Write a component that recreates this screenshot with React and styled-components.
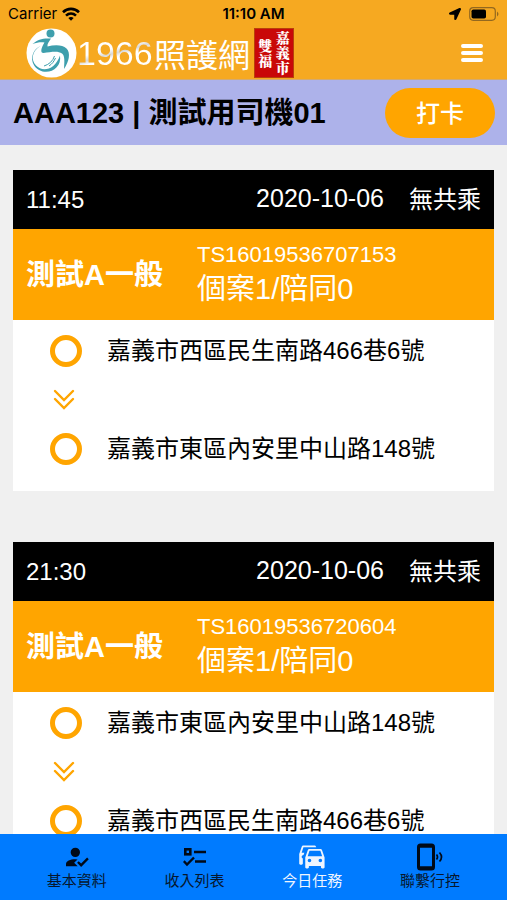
import React from "react";
import styled, { createGlobalStyle } from "styled-components";
import { FaLocationArrow } from "react-icons/fa";

const GlobalStyle = createGlobalStyle`
  * { box-sizing: border-box; }
  body {
    margin: 0;
    font-family: "Liberation Sans", "Noto Sans CJK TC", sans-serif;
    background: #f0f0f0;
    color: #000;
  }
  button { font: inherit; border: 0; cursor: pointer; }
`;

const Screen = styled.div`
  display: flex;
  flex-direction: column;
  height: 100vh;
`;

const Header = styled.header`
  flex: none;
  background: #f6a921;
  border-bottom: 1px solid #d3aa70;
`;

const StatusBar = styled.div`
  display: grid;
  grid-template-columns: 1fr auto 1fr;
  align-items: center;
  height: 26px;
  padding: 2px 8px 0;
  font: 400 15px/20px Inter, sans-serif;
`;

const StatusGroup = styled.div`
  display: flex;
  align-items: center;
  gap: ${(p) => (p.$end ? "8px" : "5px")};
  justify-content: ${(p) => (p.$end ? "flex-end" : "flex-start")};
`;

const Clock = styled.time`
  font-weight: 600;
`;

const BrandBar = styled.div`
  display: flex;
  align-items: center;
  justify-content: space-between;
  height: 53px;
  padding: 0 18px 0 26px;
`;

const Brand = styled.a`
  display: flex;
  align-items: center;
  color: #fff;
  text-decoration: none;
`;

const BrandNumber = styled.span`
  width: 77px;
  font: 400 34px/48px "Liberation Sans", sans-serif;
  background: linear-gradient(165deg, #fff 42%, #d8d8d8 50%, #fff 56%);
  background-clip: text;
  color: transparent;
`;

const BrandName = styled.span`
  font: 400 32px/48px "Noto Sans CJK TC", sans-serif;
`;

const Seal = styled.span`
  margin-left: 4px;
  width: 40px;
  height: 50px;
  display: flex;
  flex-direction: row-reverse;
  align-items: center;
  justify-content: space-evenly;
  background: #c90808;
  border: 1px solid #b8400c;
  font: 900 14px/15px "Noto Serif CJK TC", "Noto Sans CJK TC", serif;
`;

const SealColumn = styled.span`
  width: 14px;
  overflow-wrap: anywhere;
`;

const MenuButton = styled.button`
  display: grid;
  place-items: center;
  padding: 6px;
  background: transparent;
  color: #fff;
`;

const DriverBar = styled.section`
  flex: none;
  display: flex;
  align-items: center;
  justify-content: space-between;
  height: 65px;
  padding: 0 12px 0 13px;
  background: #adb2ea;
`;

const DriverName = styled.h1`
  margin: 0;
  font-size: 29px;
  line-height: 40px;
  font-weight: 700;
`;

const PunchButton = styled.button`
  width: 110px;
  height: 50px;
  padding: 0 0 2px;
  border-radius: 25px;
  background: #ffa500;
  color: #fff;
  && { font-size: 24px; font-weight: 500; }
`;

const TaskList = styled.main`
  flex: 1;
  min-height: 0;
  overflow-y: auto;
  scrollbar-width: none;
  padding: 25px 13px;
  display: flex;
  flex-direction: column;
  gap: 51px;
`;

const Card = styled.article`
  flex: none;
  background: #fff;
`;

const CardHeader = styled.div`
  display: flex;
  align-items: center;
  height: 59px;
  padding: 0 13px;
  background: #000;
  color: #fff;
  font-size: 24px;
  line-height: 36px;
`;

const TaskDate = styled.time`
  margin-left: auto;
  padding: 0 25px 4px 0;
  font-size: 25px;
`;

const Passenger = styled.div`
  display: grid;
  grid-template-columns: 171px 1fr;
  align-items: center;
  height: 91px;
  padding: 0 13px;
  background: #ffa500;
  color: #fff;
`;

const PassengerName = styled.h2`
  margin: 0;
  font-size: 29px;
  line-height: 40px;
`;

const OrderId = styled.div`
  font-size: 22px;
  line-height: 28px;
`;

const PartySize = styled.div`
  font-size: 29px;
  line-height: 40px;
`;

const Route = styled.div`
  padding: 6px 0 18px 35px;
`;

const RouteRow = styled.div`
  display: grid;
  grid-template-columns: 36px 1fr;
  column-gap: 23px;
  align-items: center;
  height: 49px;
  font-size: 24px;
  line-height: 36px;
`;

const Stop = styled.span`
  justify-self: center;
  width: 32px;
  height: 32px;
  border: 5px solid #ffa500;
  border-radius: 50%;
`;

const Arrow = styled.svg`
  justify-self: center;
  margin-right: 4px;
`;

const TabBar = styled.nav`
  flex: none;
  display: grid;
  grid-template-columns: repeat(4, 1fr);
  height: 66px;
  padding: 0 18px;
  background: #007bff;
`;

const Tab = styled.a`
  display: flex;
  flex-direction: column;
  align-items: center;
  padding-top: 9px;
  color: ${(p) => (p.$active ? "#eef5ff" : "#06172e")};
  font-size: 15px;
  line-height: 20px;
  text-decoration: none;
`;

const TabIcon = styled.span`
  display: grid;
  place-items: center;
  height: 28px;
  color: ${(p) => (p.$active ? "#eef5ff" : "#000a18")};
`;

function WifiIcon() {
  return (
    <svg width="18" height="14" viewBox="0 0 18 14" fill="none" stroke="#000" strokeWidth="2.6" aria-hidden="true">
      <path d="M1 5.2C5.5.8 12.5.8 17 5.2M4 8.6c2.9-2.6 7.1-2.6 10 0" />
      <path d="M6.3 11Q9 8.8 11.7 11L9 13.8Z" fill="#000" stroke="none" />
    </svg>
  );
}

function BatteryIcon() {
  return (
    <svg width="30" height="14" viewBox="0 0 30 14" aria-hidden="true">
      <rect x=".7" y=".7" width="25.6" height="12.6" rx="3.5" fill="none" stroke="#93681f" strokeWidth="1.2" />
      <rect x="2.5" y="2.5" width="14.5" height="9" rx="1.8" />
      <path d="M28 4.5q3 2.5 0 5z" fill="#93681f" />
    </svg>
  );
}

function BrandMark() {
  return (
    <svg width="51" height="50" viewBox="0 0 51 50" fill="none" aria-hidden="true">
      <ellipse cx="25.5" cy="25" rx="25" ry="24.5" fill="#fff" />
      <circle cx="24.5" cy="5.5" r="4" fill="#3e9fad" />
      <path d="M6.500 16C12 11 17 10 25 10.500c-2 3-4 5.500-3.500 8 7-1.800 15-2 19 2 4.500 4.500 2.500 13-2.500 20.500 .5-8 1-13-2-15.500-4-3-11-1.500-18.500-.5-3.500 0-2.500-5 1-10.500-4-.5-7.500 0-12 1.500Z" fill="#3e9fad" />
      <path d="M14.500 18C6 23 4.500 31.500 10 37.500 16.500 44.500 29 42 34 27.500 36 40 23 47.500 13 42 3 36 4.500 22.500 14.500 18Z" fill="#3e9fad" />
      <path d="M18 38c5-1.500 9-5 10.500-10M23 38c3-2 5-4.500 6.500-8" stroke="#3e9fad" strokeWidth="1" />
    </svg>
  );
}

function AccountCheckIcon() {
  return (
    <svg width="29" height="28" viewBox="0 0 24 24" fill="currentColor" aria-hidden="true">
      <path d="M21.1 12.5l1.4 1.41-6.53 6.59L12.5 17l1.4-1.41 2.07 2.08 5.13-5.17M10 17l3 3H3v-2c0-2.21 3.58-4 8-4l1.89.11L10 17m1-13a4 4 0 1 1 0 8 4 4 0 0 1 0-8" />
    </svg>
  );
}

function ChecklistIcon() {
  return (
    <svg width="24" height="20" viewBox="0 0 24 20" fill="none" stroke="currentColor" aria-hidden="true">
      <rect x="2.3" y="2.3" width="5" height="5" strokeWidth="2.6" />
      <path d="M11 5h12M12 14.5h11" strokeWidth="2.5" />
      <path d="m.8 14.2 3.200 3.300 7-7" strokeWidth="2.4" />
    </svg>
  );
}

function CarsIcon() {
  return (
    <svg width="29" height="29" viewBox="0 0 24 24" fill="currentColor" aria-hidden="true">
      <path d="M8 11 9.5 6.5h9L20 11M18.5 16a1.5 1.5 0 1 1 0-3 1.5 1.5 0 0 1 0 3m-9 0a1.5 1.5 0 1 1 0-3 1.5 1.5 0 0 1 0 3M19.92 6c-.21-.6-.78-1-1.42-1h-9c-.64 0-1.21.4-1.42 1L6 12v8c0 .55.45 1 1 1h1c.55 0 1-.45 1-1v-1h10v1c0 .55.45 1 1 1h1c.55 0 1-.45 1-1v-8zM14.92 3c-.21-.6-.78-1-1.42-1h-9c-.64 0-1.21.4-1.42 1L1 9v8c0 .55.45 1 1 1h1c.55 0 1-.45 1-1v-4.09A1.5 1.5 0 0 1 4.5 10h.07l.7-2H3l1.5-4.5h10.59z" fillRule="evenodd" />
    </svg>
  );
}

function PhoneIcon() {
  return (
    <svg width="26" height="28" viewBox="0 0 26 28" fill="none" stroke="currentColor" aria-hidden="true">
      <rect x="1.5" y="2" width="15" height="24" rx="2" strokeWidth="3" />
      <path d="M2 3.2h14M2 24.8h14" strokeWidth="3" />
      <path d="M19.5 11.500q2 2.500 0 5M22.500 9.500q4 4.500 0 9" strokeWidth="1.700" />
    </svg>
  );
}

const tasks = [
  {
    time: "11:45",
    order: "TS16019536707153",
    from: "嘉義市西區民生南路466巷6號",
    to: "嘉義市東區內安里中山路148號",
  },
  {
    time: "21:30",
    order: "TS16019536720604",
    from: "嘉義市東區內安里中山路148號",
    to: "嘉義市西區民生南路466巷6號",
  },
];

const tabs = [
  { label: "基本資料", icon: <AccountCheckIcon /> },
  { label: "收入列表", icon: <ChecklistIcon /> },
  { label: "今日任務", icon: <CarsIcon />, active: true },
  { label: "聯繫行控", icon: <PhoneIcon /> },
];

function TaskCard({ task }) {
  return (
    <Card>
      <CardHeader>
        <time>{task.time}</time>
        <TaskDate>2020-10-06</TaskDate>
        <span>無共乘</span>
      </CardHeader>
      <Passenger>
        <PassengerName>測試A一般</PassengerName>
        <div>
          <OrderId>{task.order}</OrderId>
          <PartySize>個案1/陪同0</PartySize>
        </div>
      </Passenger>
      <Route>
        <RouteRow>
          <Stop />
          <span>{task.from}</span>
        </RouteRow>
        <RouteRow>
          <Arrow width="22" height="22" viewBox="0 0 22 22" fill="none" stroke="#ffa500" strokeWidth="2.4" strokeLinecap="round" aria-hidden="true">
            <path d="m2 2 9 9 9-9M2 10l9 9 9-9" />
          </Arrow>
        </RouteRow>
        <RouteRow>
          <Stop />
          <span>{task.to}</span>
        </RouteRow>
      </Route>
    </Card>
  );
}

export default function App() {
  return (
    <Screen>
      <GlobalStyle />
      <Header>
        <StatusBar>
          <StatusGroup>
            Carrier
            <WifiIcon />
          </StatusGroup>
          <Clock>11:10 AM</Clock>
          <StatusGroup $end>
            <FaLocationArrow size={12} />
            <BatteryIcon />
          </StatusGroup>
        </StatusBar>
        <BrandBar>
          <Brand href="#home">
            <BrandMark />
            <BrandNumber>1966</BrandNumber>
            <BrandName>照護網</BrandName>
            <Seal>
              <SealColumn>嘉義市</SealColumn>
              <SealColumn>雙福</SealColumn>
            </Seal>
          </Brand>
          <MenuButton type="button" aria-label="選單">
            <svg width="22" height="20" viewBox="0 0 22 20" stroke="currentColor" strokeWidth="4" strokeLinecap="round" aria-hidden="true">
              <path d="M2 3h18M2 10h18M2 17h18" />
            </svg>
          </MenuButton>
        </BrandBar>
      </Header>
      <DriverBar>
        <DriverName>AAA123 | 測試用司機01</DriverName>
        <PunchButton type="button">打卡</PunchButton>
      </DriverBar>
      <TaskList>
        {tasks.map((task) => (
          <TaskCard key={task.order} task={task} />
        ))}
      </TaskList>
      <TabBar>
        {tabs.map((tab) => (
          <Tab key={tab.label} href="#tab" $active={tab.active} aria-current={tab.active ? "page" : undefined}>
            <TabIcon $active={tab.active}>{tab.icon}</TabIcon>
            {tab.label}
          </Tab>
        ))}
      </TabBar>
    </Screen>
  );
}
